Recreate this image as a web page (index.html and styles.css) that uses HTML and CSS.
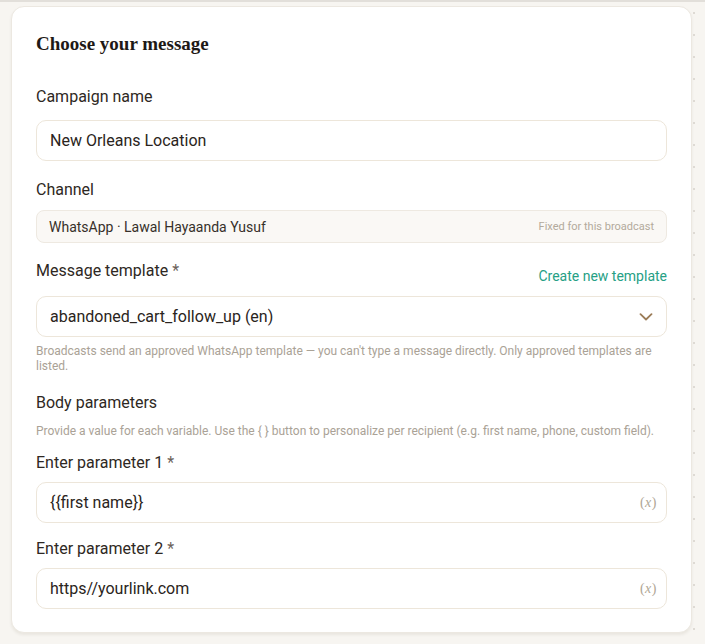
FILE: index.html
```html
<!DOCTYPE html>
<html lang="en">
<head>
<meta charset="utf-8">
<title>Choose your message</title>
<link rel="stylesheet" href="styles.css">
</head>
<body>
<div class="topline"></div>
<div class="page">
  <section class="card">
    <h2 class="card-title">Choose your message</h2>

    <div class="field field-campaign">
      <div class="label">Campaign name</div>
      <div class="input"><span class="value">New Orleans Location</span></div>
    </div>

    <div class="field field-channel">
      <div class="label">Channel</div>
      <div class="static-box">
        <span class="static-value">WhatsApp · Lawal Hayaanda Yusuf</span>
        <span class="static-note">Fixed for this broadcast</span>
      </div>
    </div>

    <div class="field field-template">
      <div class="label-row">
        <div class="label">Message template <span class="req">*</span></div>
        <a class="link" href="#">Create new template</a>
      </div>
      <div class="input select">
        <span class="value">abandoned_cart_follow_up (en)</span>
        <svg class="chevron" width="14" height="8" viewBox="0 0 14 8" aria-hidden="true">
          <path d="M1.5 1.2 L7 6.5 L12.5 1.2" fill="none" stroke="#9b7c58" stroke-width="1.8" stroke-linecap="round" stroke-linejoin="round"/>
        </svg>
      </div>
      <p class="help help-template">Broadcasts send an approved WhatsApp template — you can't type a message directly. Only approved templates are listed.</p>
    </div>

    <div class="section">
      <div class="label">Body parameters</div>
      <p class="help help-params">Provide a value for each variable. Use the { } button to personalize per recipient (e.g. first name, phone, custom field).</p>
    </div>

    <div class="field field-param">
      <div class="label">Enter parameter 1 <span class="req">*</span></div>
      <div class="input">
        <span class="value">{{first name}}</span>
        <span class="var-btn">(<i>x</i>)</span>
      </div>
    </div>

    <div class="field field-param">
      <div class="label">Enter parameter 2 <span class="req">*</span></div>
      <div class="input">
        <span class="value">https//yourlink.com</span>
        <span class="var-btn">(<i>x</i>)</span>
      </div>
    </div>
  </section>
  <div class="rail"></div>
</div>
</body>
</html>
```

FILE: styles.css
```css
* {
  box-sizing: border-box;
}

html,
body {
  margin: 0;
  padding: 0;
}

body {
  background: #f7f5f1;
  font-family: Roboto, "Liberation Sans", sans-serif;
  color: #2b2521;
  height: 644px;
  overflow: hidden;
}

.topline {
  height: 2px;
  background: #e2dfda;
}

.page {
  display: flex;
  align-items: flex-start;
  padding: 4px 0 0 11px;
}

.card {
  width: 681px;
  background: #ffffff;
  border: 1px solid #ece8e1;
  border-radius: 13px;
  box-shadow: 0 2px 3px rgba(60, 45, 20, 0.07);
  padding: 25px 24px 23px;
}

.card-title {
  margin: 0;
  font-family: "Liberation Serif", "DejaVu Serif", serif;
  font-weight: 700;
  font-size: 19px;
  line-height: 24px;
  color: #1e1916;
}

.label {
  font-size: 16px;
  line-height: 20px;
  color: #2e2823;
}

.req {
  color: #6b625a;
}

.field-campaign {
  margin-top: 31px;
}

.field-campaign .input {
  margin-top: 13px;
}

.field-channel {
  margin-top: 19px;
}

.field-template {
  margin-top: 18px;
}

.field-param {
  margin-top: 14px;
}

.field-param + .field-param {
  margin-top: 16px;
}

.field-param .input {
  margin-top: 9px;
}

.input {
  height: 41px;
  border: 1px solid #ede6da;
  border-radius: 10px;
  background: #ffffff;
  display: flex;
  align-items: center;
  justify-content: space-between;
  padding: 0 9px 0 13px;
}

.value {
  font-size: 16px;
  color: #2a2420;
}

.static-box {
  margin-top: 10px;
  height: 33px;
  border: 1px solid #eee9e1;
  border-radius: 8px;
  background: #faf8f5;
  display: flex;
  align-items: center;
  justify-content: space-between;
  padding: 0 12px 0 12px;
}

.static-value {
  font-size: 14px;
  color: #37302a;
}

.static-note {
  font-size: 11px;
  color: #b3aa9c;
}

.label-row {
  display: flex;
  justify-content: space-between;
  align-items: flex-start;
}

.link {
  margin-top: 7px;
  font-size: 14px;
  font-weight: 400;
  color: #26a085;
  text-decoration: none;
  line-height: 16px;
}

.select {
  margin-top: 12px;
  padding-right: 13px;
}

.chevron {
  display: block;
}

.help {
  margin: 0;
  font-size: 12px;
  line-height: 15px;
  color: #aaa296;
}

.help-template {
  margin-top: 7px;
}

.section {
  margin-top: 19px;
}

.help-params {
  margin-top: 11px;
}

.var-btn {
  font-family: "Liberation Serif", "DejaVu Serif", serif;
  font-size: 14px;
  color: #b0a695;
  letter-spacing: 0.5px;
}

.var-btn i {
  font-style: italic;
}

/* dotted guide beside the card */
.rail {
  width: 13px;
  height: 640px;
  background-image: linear-gradient(to bottom, #dedad4 2px, transparent 2px);
  background-size: 2px 22px;
  background-repeat: repeat-y;
  background-position: 1px 6px;
}
```
